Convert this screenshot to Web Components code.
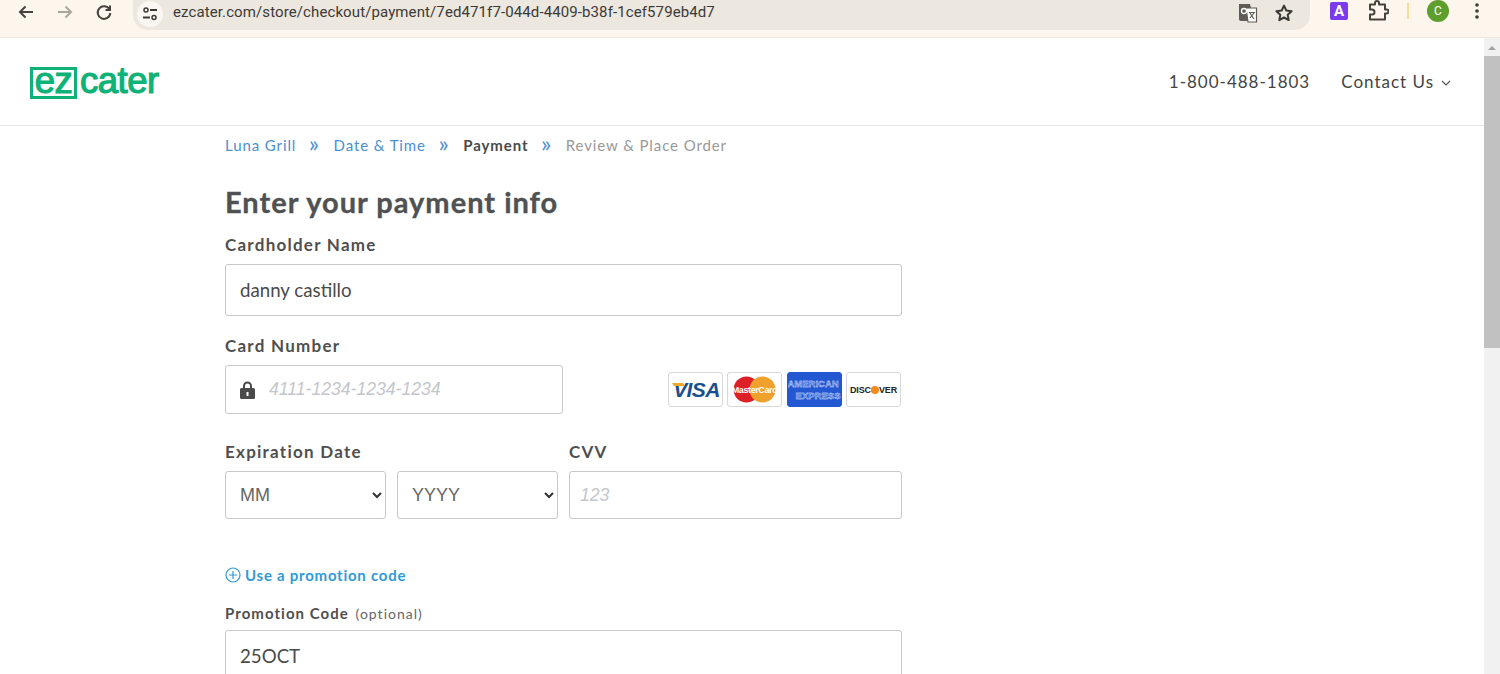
<!DOCTYPE html>
<html lang="en">
<head>
<meta charset="utf-8">
<title>ezCater payment</title>
<style>
    html, body { margin: 0; height: 674px; overflow: hidden; background: #fff; font-family: Lato, "Liberation Sans", sans-serif; }
    .frame { display: flex; height: 636px; overflow: hidden; }
    .page { flex: 1; min-width: 0; }
</style>
</head>
<body>
<browser-bar></browser-bar>
<div class="frame">
    <div class="page">
        <site-header></site-header>
        <checkout-form></checkout-form>
    </div>
    <scroll-track></scroll-track>
</div>

<script>
(function () {
    'use strict';

    function define(name, html) {
        customElements.define(name, class extends HTMLElement {
            constructor() {
                super();
                this.attachShadow({ mode: 'open' }).innerHTML = html;
            }
        });
    }

    define('browser-bar', `
        <style>
            :host { display: flex; align-items: flex-start; height: 37px; background: #fdf6ec; border-bottom: 1px solid #f0e8dc; color: #47433c; }
            svg { display: block; fill: none; stroke: currentColor; stroke-width: 2; }
            .nav { display: flex; width: 133px; height: 30px; align-items: center; flex: none; padding-left: 17px; box-sizing: border-box; gap: 21px; }
            .omni { display: flex; align-items: center; width: 1177px; height: 30px; flex: none; box-sizing: border-box; background: #ece7df; border-radius: 0 0 15px 15px; padding-left: 4px; font: 15px Roboto, "Liberation Sans", sans-serif; letter-spacing: .105px; color: #3c3a36; }
            .tune { display: flex; align-items: center; justify-content: center; width: 26px; height: 26px; margin-right: 10px; background: #faf7f2; border-radius: 50%; margin-top: -2px; }
            .url { flex: 1; margin-top: -6px; }
            .end { display: flex; align-items: center; margin-top: -5px; margin-right: 16px; gap: 15px; }
            .tools { display: flex; align-items: center; height: 30px; margin-top: -4px; }
            .a { display: flex; align-items: center; justify-content: center; width: 18px; height: 18px; margin-left: 20px; background: #7c3aed; color: #fff; font: bold 15px Roboto, sans-serif; border-radius: 2px; }
            .sep { width: 2px; height: 16px; background: #f6dc9c; margin-left: 18px; }
            .avatar { display: flex; align-items: center; justify-content: center; width: 22px; height: 22px; margin-left: 18px; background: #5e9e2c; color: #fff; border-radius: 50%; font: 12px Roboto, sans-serif; }
        </style>
        <div class="nav">
            <svg width="18" height="18" viewBox="0 0 18 18" style="margin-top:-6px"><path d="M16 9H3M8.500 3.500 3 9l5.500 5.500"/></svg>
            <svg width="18" height="18" viewBox="0 0 18 18" style="margin-top:-6px;color:#aaa69e"><path d="M2 9h13M9.500 3.500 15 9l-5.500 5.500"/></svg>
            <svg width="18" height="18" viewBox="0 0 18 18" style="margin-top:-6px"><path d="M14.500 6.500A6.300 6.300 0 1 0 15.300 10M15 2.500v4.500h-4.500"/></svg>
        </div>
        <div class="omni">
            <span class="tune"><svg width="16" height="16" viewBox="0 0 16 16" stroke-width="1.600"><circle cx="4" cy="4" r="2" stroke-width="1.500"/><path d="M8 4h7M1 11.500h7"/><circle cx="12" cy="11.500" r="2" stroke-width="1.500"/></svg></span>
            <span class="url">ezcater.com/store/checkout/payment/7ed471f7-044d-4409-b38f-1cef579eb4d7</span>
            <span class="end">
                <svg width="22" height="22" viewBox="0 0 22 22" stroke="none" style="stroke:none"><path fill="#5f5c56" d="M2 2h11l1 4h-4l1 13H4a2 2 0 0 1-2-2z"/><path fill="#fff" stroke="#5f5c56" stroke-width="1.200" d="M9 6h10.500v14H11z"/><path stroke="#5f5c56" stroke-width="1.200" d="M12 10.500h6M13 16l4-5M13 11l4 6"/><circle cx="7" cy="9" r="2.500" stroke="#fff" stroke-width="1.300"/></svg>
                <svg width="20" height="20" viewBox="0 0 20 20" stroke-width="1.800"><path d="m10 2.600 2.300 4.900 5.300.7-3.900 3.600 1 5.300-4.700-2.600-4.700 2.600 1-5.300-3.900-3.600 5.300-.7z" stroke-linejoin="round"/></svg>
            </span>
        </div>
        <div class="tools">
            <span class="a">A</span>
            <svg width="22" height="22" viewBox="0 0 22 22" style="margin-left:19px" stroke-width="1.900"><path d="M3 5h5V3.500a2 2 0 0 1 4 0V5h6v5h1.500a2 2 0 0 1 0 4H18v6H3v-5h2a2.500 2.500 0 0 0 0-5H3z" stroke-linejoin="round" transform="translate(0 -.5)"/></svg>
            <span class="sep"></span>
            <span class="avatar">C</span>
            <svg width="4" height="16" viewBox="0 0 4 16" style="margin-left:26px;stroke:none;fill:#3c3a36"><circle cx="2" cy="2" r="1.800"/><circle cx="2" cy="8" r="1.800"/><circle cx="2" cy="14" r="1.800"/></svg>
        </div>
    `);

    define('ez-logo', `
        <style>
            :host { display: flex; align-items: center; color: #0db277; font: 400 36.500px/1 "Liberation Sans", Arial, sans-serif; letter-spacing: -.5px; -webkit-text-stroke: 1.200px currentColor; }
            .box { display: flex; align-items: center; justify-content: center; width: 47px; height: 32px; box-sizing: border-box; border: 3.500px solid currentColor; line-height: 25px; padding-bottom: 5px; -webkit-text-stroke: 1.200px currentColor; }
            .rest { margin-left: 3px; margin-top: -4px; }
        </style>
        <span class="box">ez</span><span class="rest">cater</span>
    `);

    define('site-header', `
        <style>
            :host { display: flex; align-items: center; justify-content: space-between; height: 88px; box-sizing: border-box; padding: 3px 33px 0 30px; border-bottom: 1px solid #e6e6e6; color: #444; font-size: 17px; letter-spacing: 1px; }
            nav { display: flex; align-items: center; gap: 31px; margin-top: -3px; }
            .contact { display: flex; align-items: center; gap: 7px; }
            svg { display: block; margin-top: 3px; }
        </style>
        <ez-logo></ez-logo>
        <nav>
            <span>1-800-488-1803</span>
            <span class="contact">Contact Us
                <svg width="10" height="6" viewBox="0 0 10 6" fill="none" stroke="#555" stroke-width="1.200"><path d="m1 1 4 4 4-4"/></svg>
            </span>
        </nav>
    `);

    define('bread-crumbs', `
        <style>
            :host { display: flex; align-items: center; height: 20px; font-size: 15px; letter-spacing: .9px; color: #4b8fd0; }
            .sep { margin: -4px 14.500px 0 12.500px; font-size: 24px; line-height: 20px; letter-spacing: 0; }
            b { color: #4a4a4a; }
            .todo { color: #999; }
        </style>
        <span>Luna Grill</span><span class="sep">»</span>
        <span>Date &amp; Time</span><span class="sep">»</span>
        <b>Payment</b><span class="sep">»</span>
        <span class="todo">Review &amp; Place Order</span>
    `);

    define('form-field', `
        <style>
            :host { display: block; }
            .label { display: block; height: 20px; line-height: 20px; margin-bottom: var(--label-gap, 9px); font-size: var(--label-size, 17px); font-weight: 700; letter-spacing: var(--label-ls, 1.250px); color: #4f4f4f; }
        </style>
        <span class="label"><slot name="label"></slot></span>
        <slot></slot>
    `);

    define('text-box', `
        <style>
            :host { display: flex; align-items: center; box-sizing: border-box; height: 100%; padding: 0 14px; background: #fff; border: 1px solid #c8c8c8; border-radius: 3px; font-size: 18.700px; color: #4a4a4a; }
            :host([placeholder]) { color: #c4c6cb; font: italic 17.600px "Liberation Sans", Arial, sans-serif; }
        </style>
        <slot name="icon"></slot><slot></slot>
    `);

    define('select-box', `
        <style>
            :host { display: flex; align-items: center; justify-content: space-between; box-sizing: border-box; height: 48px; padding: 0 3px 0 14px; background: #fff; border: 1px solid #c8c8c8; border-radius: 3px; font: 18px "Liberation Sans", Arial, sans-serif; color: #666; }
            svg { display: block; }
        </style>
        <slot></slot>
        <svg width="10" height="7" viewBox="0 0 10 7" fill="none" stroke="#333" stroke-width="2"><path d="m1 1 4 4 4-4"/></svg>
    `);

    define('card-badges', `
        <style>
            :host { display: flex; gap: 4.500px; margin-right: 1px; }
            span { display: flex; align-items: center; justify-content: center; box-sizing: border-box; width: 55px; height: 35px; background: #fff; border: 1px solid #d8d8d8; border-radius: 3px; font-family: "Liberation Sans", Arial, sans-serif; font-weight: 700; overflow: hidden; position: relative; }
            .visa { color: #1a4f8f; font-size: 21px; font-style: italic; letter-spacing: -.6px; padding-left: 3px; }
            .visa::before { content: ""; position: absolute; left: 4px; top: 10px; width: 11px; height: 3px; background: #eda92c; transform: skewX(30deg); }
            .mc svg { position: absolute; left: 5px; top: 3px; }
            .mc i { position: relative; font-size: 9px; font-style: normal; color: #fff; letter-spacing: -.4px; }
            .amex { background: #2358d2; border-color: #2358d2; color: #3d6cdc; -webkit-text-stroke: .3px #f2f6ff; font-size: 9.500px; line-height: 12px; flex-direction: column; align-items: flex-start; letter-spacing: 0; }
            .amex em { font-style: normal; align-self: flex-end; }
            .disc { font-size: 9px; color: #222; letter-spacing: -.15px; }
            .disc u { display: inline-block; width: 8px; height: 8px; line-height: 8px; border-radius: 50%; color: #f28a1e; background: #f28a1e; text-decoration: none; }
        </style>
        <span class="visa">VISA</span>
        <span class="mc">
            <svg width="43" height="27" viewBox="0 0 43 27"><circle cx="13.500" cy="13.500" r="13" fill="#dd2027"/><circle cx="29.500" cy="13.500" r="13" fill="#f0a02c"/></svg>
            <i>MasterCard</i>
        </span>
        <span class="amex">AMERICAN<em>EXPRESS</em></span>
        <span class="disc">DISC<u>O</u>VER</span>
    `);

    define('promo-link', `
        <style>
            :host { display: flex; align-items: center; gap: 4px; height: 20px; font-size: 15px; font-weight: 700; letter-spacing: .75px; color: #2f9bd6; }
            svg { display: block; }
        </style>
        <svg width="16" height="16" viewBox="0 0 16 16" fill="none" stroke="currentColor" stroke-width="1.200"><circle cx="8" cy="8" r="7"/><path d="M8 4v8M4 8h8"/></svg>
        <slot></slot>
    `);

    define('checkout-form', `
        <style>
            :host { display: block; width: 677px; margin-left: 225px; padding-top: 9px; }
            h1 { margin: 30px 0 0; height: 34px; line-height: 34px; font-size: 29px; font-weight: 700; letter-spacing: 1px; color: #4f5152; -webkit-text-stroke: .35px currentColor; }
            .name { margin-top: 16px; }
            .name text-box { height: 52px; }
            .number { margin-top: 20px; display: flex; align-items: flex-end; justify-content: space-between; }
            .number form-field { width: 338px; }
            .number text-box { height: 49px; }
            .number card-badges { margin-bottom: 7px; }
            .lock { display: block; margin-right: 14px; }
            .row { display: flex; gap: 11px; margin-top: 28px; }
            .exp { width: 333px; }
            .pair { display: flex; gap: 11px; }
            .pair select-box { width: 161px; }
            .cvv { flex: 1; }
            .cvv text-box { height: 48px; padding-left: 10px; }
            promo-link { margin-top: 46px; }
            .promo { margin-top: 18px; --label-size: 15px; --label-ls: 1.050px; --label-gap: 7px; }
            .promo text-box { height: 52px; }
            .hint { font-size: 14px; font-weight: 400; letter-spacing: 1px; color: #666; margin-left: 2px; }
        </style>
        <bread-crumbs></bread-crumbs>
        <h1>Enter your payment info</h1>
        <form-field class="name">
            <span slot="label">Cardholder Name</span>
            <text-box>danny castillo</text-box>
        </form-field>
        <div class="number">
            <form-field>
                <span slot="label">Card Number</span>
                <text-box placeholder>
                    <svg class="lock" slot="icon" width="15" height="18" viewBox="0 0 15 18"><path fill="#4a4a4a" d="M3 7V5a4.500 4.500 0 0 1 9 0v2h1.500A1.500 1.500 0 0 1 15 8.500v8a1.500 1.500 0 0 1-1.500 1.500h-12A1.500 1.500 0 0 1 0 16.500v-8A1.500 1.500 0 0 1 1.500 7zm2 0h5V5a2.500 2.500 0 0 0-5 0zm1.500 4v4h2v-4z"/></svg>
                    4111-1234-1234-1234
                </text-box>
            </form-field>
            <card-badges></card-badges>
        </div>
        <div class="row">
            <form-field class="exp">
                <span slot="label">Expiration Date</span>
                <div class="pair">
                    <select-box>MM</select-box>
                    <select-box>YYYY</select-box>
                </div>
            </form-field>
            <form-field class="cvv">
                <span slot="label">CVV</span>
                <text-box placeholder>123</text-box>
            </form-field>
        </div>
        <promo-link>Use a promotion code</promo-link>
        <form-field class="promo">
            <span slot="label">Promotion Code <span class="hint">(optional)</span></span>
            <text-box>25OCT</text-box>
        </form-field>
    `);

    define('scroll-track', `
        <style>
            :host { display: block; width: 16px; flex: none; background: #f1f1f1; }
            .up { width: 0; height: 0; margin: 8px auto 0; border: 4px solid transparent; border-top: 0; border-bottom: 4px solid #a3a3a3; }
            .thumb { margin-top: 6px; height: 292px; background: #c1c1c1; }
        </style>
        <div class="up"></div>
        <div class="thumb"></div>
    `);
})();
</script>
</body>
</html>
